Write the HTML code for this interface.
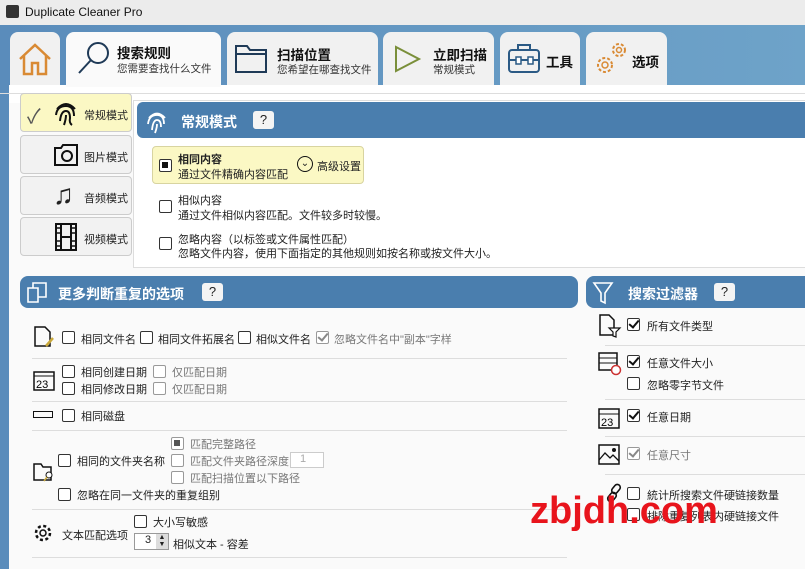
<!DOCTYPE html>
<html><head><meta charset="utf-8"><style>
*{margin:0;padding:0;box-sizing:border-box}
body{width:805px;height:569px;overflow:hidden;position:relative;background:#fafafa;font-family:"Liberation Sans","Noto Sans CJK SC",sans-serif;color:#222}
.a{position:absolute}
.tab{position:absolute;top:32px;height:53px;background:#f1f1f1;border-radius:8px 8px 0 0}
.t1{font-size:13.5px;font-weight:bold;color:#111}
.t2{font-size:10.5px;color:#333}
.cb{position:absolute;width:13px;height:13px;border:1.5px solid #333;border-radius:2px;background:#fff}
.cb.g{border-color:#999}
.ck::after{content:"";position:absolute;left:3px;top:-1px;width:4px;height:8px;border:solid #111;border-width:0 2px 2px 0;transform:rotate(40deg)}
.ck.g::after{border-color:#888}
.lb{position:absolute;font-size:11px;color:#222;white-space:nowrap}
.lb.g{color:#777}
.hd{position:absolute;background:#4a7eae;border-radius:8px;color:#fff;font-weight:bold;font-size:14px}
.q{position:absolute;width:21px;height:18px;background:#f4f4f4;border-radius:3px;color:#222;font-size:13px;text-align:center;line-height:18px;font-weight:normal}
.sep{position:absolute;height:1px;background:#ddd}
.mb{position:absolute;left:20px;width:112px;height:39px;background:#f2f2f2;border:1px solid #ccc;border-radius:4px;font-size:11px}
</style></head><body>
<div class="a" style="left:0;top:0;width:805px;height:25px;background:#ececec"></div>
<div class="a" style="left:6px;top:5px;width:13px;height:13px;background:#333;border-radius:2px"></div>
<div class="a" style="left:25px;top:5px;font-size:12px;color:#111">Duplicate Cleaner Pro</div>
<div class="a" style="left:0;top:25px;width:805px;height:60px;background:linear-gradient(90deg,#5a8cbb,#6ea3c9)"></div>
<div class="a" style="left:0;top:85px;width:805px;height:18px;background:#fff"></div>
<div class="a" style="left:0;top:85px;width:9px;height:484px;background:#5a8cbb"></div>
<div class="a" style="left:0;top:93px;width:805px;height:1px;background:#ddd"></div>
<!-- tabs -->
<div class="tab" style="left:10px;width:50px"><svg class="a" style="left:7px;top:10px" width="36" height="34" viewBox="0 0 36 34"><path d="M3 17L18 3L33 17M7 14V32H15V21H21V32H29V14" fill="none" stroke="#d98a34" stroke-width="2.5"/></svg></div>
<div class="tab" style="left:66px;width:155px;background:#fafafa;height:55px"><svg class="a" style="left:10px;top:8px" width="36" height="36"><circle cx="22" cy="13" r="10" fill="none" stroke="#1f3a57" stroke-width="2"/><path d="M15 20L3 33" stroke="#1f3a57" stroke-width="2"/></svg><div class="a t1" style="left:51px;top:10px">搜索规则</div><div class="a t2" style="left:51px;top:29px">您需要查找什么文件</div></div>
<div class="tab" style="left:227px;width:151px"><svg class="a" style="left:7px;top:10px" width="36" height="32"><path d="M2 4H13L16 8H32V30H2Z M2 12H32" fill="none" stroke="#1f3a57" stroke-width="2"/></svg><div class="a t1" style="left:50px;top:12px">扫描位置</div><div class="a t2" style="left:50px;top:30px">您希望在哪查找文件</div></div>
<div class="tab" style="left:383px;width:111px"><svg class="a" style="left:10px;top:12px" width="30" height="30"><path d="M3 3L26 15L3 27Z" fill="none" stroke="#7a8f3a" stroke-width="2"/></svg><div class="a t1" style="left:50px;top:12px">立即扫描</div><div class="a t2" style="left:50px;top:30px">常规模式</div></div>
<div class="tab" style="left:500px;width:80px"><svg class="a" style="left:7px;top:10px" width="36" height="34"><rect x="2" y="8" width="30" height="22" rx="3" fill="none" stroke="#2b5a85" stroke-width="2"/><path d="M11 8V3H23V8M2 18H32" fill="none" stroke="#2b5a85" stroke-width="2"/><rect x="9" y="15" width="5" height="7" fill="#fff" stroke="#2b5a85" stroke-width="1.5"/><rect x="21" y="15" width="5" height="7" fill="#fff" stroke="#2b5a85" stroke-width="1.5"/></svg><div class="a t1" style="left:46px;top:19px">工具</div></div>
<div class="tab" style="left:586px;width:81px"><svg class="a" style="left:7px;top:8px" width="36" height="38"><circle cx="12" cy="25" r="7" fill="none" stroke="#d98a34" stroke-width="2" stroke-dasharray="3 2"/><circle cx="12" cy="25" r="3" fill="none" stroke="#d98a34" stroke-width="1.5"/><circle cx="26" cy="10" r="6" fill="none" stroke="#d98a34" stroke-width="2" stroke-dasharray="3 2"/><circle cx="26" cy="10" r="2.5" fill="none" stroke="#d98a34" stroke-width="1.5"/></svg><div class="a t1" style="left:46px;top:19px">选项</div></div>
<!-- mode buttons -->
<div class="mb" style="top:93px;background:#fbf8c4"><span class="a" style="left:6px;top:6px;font-size:20px;color:#555">✓</span><svg class="a" style="left:32px;top:5px" width="26" height="28"><g fill="none" stroke="#111" stroke-width="2"><path d="M4 10Q13 0 22 10"/><path d="M3 16Q4 7 13 7Q21 7 21 17"/><path d="M7 22Q8 12 13 12Q17 12 17 19Q16 24 19 26"/><path d="M11 26Q13 20 13 16"/></g></svg><span class="a" style="left:63px;top:13px">常规模式</span></div>
<div class="mb" style="top:135px"><svg class="a" style="left:32px;top:7px" width="26" height="24"><path d="M2 5H8L10 2H24V22H2Z" fill="none" stroke="#111" stroke-width="2"/><circle cx="14" cy="13" r="5" fill="none" stroke="#111" stroke-width="2"/></svg><span class="a" style="left:63px;top:13px">图片模式</span></div>
<div class="mb" style="top:176px"><span class="a" style="left:32px;top:2px;font-size:28px">♫</span><span class="a" style="left:63px;top:13px">音频模式</span></div>
<div class="mb" style="top:217px"><svg class="a" style="left:34px;top:5px" width="22" height="28"><rect x="1" y="1" width="20" height="26" fill="none" stroke="#111" stroke-width="2"/><path d="M6 1V27M16 1V27M6 14H16" stroke="#111" stroke-width="2"/><path d="M1 5H6M1 10H6M1 18H6M1 23H6M16 5H21M16 10H21M16 18H21M16 23H21" stroke="#111" stroke-width="1.5"/></svg><span class="a" style="left:63px;top:13px">视频模式</span></div>
<!-- panel -->
<div class="a" style="left:133px;top:100px;width:680px;height:168px;background:#fff;border:1px solid #ddd"></div>
<div class="hd" style="left:137px;top:102px;width:680px;height:36px;border-radius:6px 0 0 6px"><svg class="a" style="left:8px;top:6px" width="24" height="26"><g fill="none" stroke="#fff" stroke-width="1.8"><path d="M4 10Q12 1 20 10"/><path d="M3 16Q4 7 12 7Q19 7 19 16"/><path d="M7 22Q8 12 12 12Q16 12 16 19"/><path d="M10 25Q12 20 12 16"/></g></svg><span class="a" style="left:44px;top:10px">常规模式</span><div class="q" style="left:116px;top:9px">?</div></div>
<div class="a" style="left:152px;top:146px;width:212px;height:38px;background:#fbf8c4;border:1px solid #d8d4a0;border-radius:4px"></div>
<div class="cb" style="left:159px;top:159px"><div class="a" style="left:2px;top:2px;width:6px;height:6px;background:#111"></div></div>
<div class="lb" style="left:178px;top:151px;font-weight:bold">相同内容</div>
<div class="lb" style="left:178px;top:166px">通过文件精确内容匹配</div>
<div class="a" style="left:297px;top:156px;width:16px;height:16px;border:1.5px solid #111;border-radius:50%;font-size:10px;text-align:center;line-height:13px">⌄</div>
<div class="lb" style="left:317px;top:158px">高级设置</div>
<div class="cb" style="left:159px;top:200px"></div>
<div class="lb" style="left:178px;top:192px">相似内容</div>
<div class="lb" style="left:178px;top:207px">通过文件相似内容匹配。文件较多时较慢。</div>
<div class="cb" style="left:159px;top:237px"></div>
<div class="lb" style="left:178px;top:231px">忽略内容（以标签或文件属性匹配）</div>
<div class="lb" style="left:178px;top:245px">忽略文件内容，使用下面指定的其他规则如按名称或按文件大小。</div>
<!-- section headers -->
<div class="hd" style="left:20px;top:276px;width:558px;height:32px"><svg class="a" style="left:6px;top:5px" width="22" height="22"><path d="M2 7H12V21H2ZM7 7V2H20V16H12" fill="none" stroke="#fff" stroke-width="1.6"/></svg><span class="a" style="left:38px;top:8px">更多判断重复的选项</span><div class="q" style="left:182px;top:7px">?</div></div>
<div class="hd" style="left:586px;top:276px;width:230px;height:32px"><svg class="a" style="left:6px;top:5px" width="22" height="24"><path d="M2 2H20L13 12V22L9 20V12Z" fill="none" stroke="#fff" stroke-width="1.6"/></svg><span class="a" style="left:42px;top:8px">搜索过滤器</span><div class="q" style="left:128px;top:7px">?</div></div>
<!-- left rows -->
<svg class="a" style="left:33px;top:325px" width="22" height="24"><path d="M2 2H12L17 7V21H2Z" fill="none" stroke="#111" stroke-width="1.5"/><path d="M13 21L20 13" stroke="#c9a83a" stroke-width="2.5"/></svg>
<div class="cb" style="left:62px;top:331px"></div><div class="lb" style="left:81px;top:331px">相同文件名</div>
<div class="cb" style="left:140px;top:331px"></div><div class="lb" style="left:158px;top:331px">相同文件拓展名</div>
<div class="cb" style="left:238px;top:331px"></div><div class="lb" style="left:256px;top:331px">相似文件名</div>
<div class="cb ck g" style="left:316px;top:331px"></div><div class="lb g" style="left:334px;top:331px">忽略文件名中"副本"字样</div>
<div class="sep" style="left:32px;top:358px;width:535px"></div>
<svg class="a" style="left:33px;top:369px" width="22" height="22"><rect x="1" y="3" width="20" height="18" fill="none" stroke="#111" stroke-width="1.5"/><path d="M1 7H21" stroke="#111"/><text x="3" y="19" font-size="11" font-family="Liberation Sans">23</text></svg>
<div class="cb" style="left:62px;top:365px"></div><div class="lb" style="left:81px;top:364px">相同创建日期</div>
<div class="cb g" style="left:153px;top:365px"></div><div class="lb g" style="left:172px;top:364px">仅匹配日期</div>
<div class="cb" style="left:62px;top:382px"></div><div class="lb" style="left:81px;top:381px">相同修改日期</div>
<div class="cb g" style="left:153px;top:382px"></div><div class="lb g" style="left:172px;top:381px">仅匹配日期</div>
<div class="sep" style="left:32px;top:401px;width:535px"></div>
<div class="a" style="left:33px;top:411px;width:20px;height:7px;border:1.5px solid #111"></div>
<div class="cb" style="left:62px;top:409px"></div><div class="lb" style="left:81px;top:408px">相同磁盘</div>
<div class="sep" style="left:32px;top:430px;width:535px"></div>
<svg class="a" style="left:33px;top:460px" width="22" height="22"><path d="M1 4H8L10 7H18V20H1Z" fill="none" stroke="#111" stroke-width="1.5"/><circle cx="16" cy="15" r="3" fill="#fff" stroke="#111"/><path d="M14 17L11 21" stroke="#c9a83a" stroke-width="1.5"/></svg>
<div class="cb" style="left:58px;top:454px"></div><div class="lb" style="left:77px;top:453px">相同的文件夹名称</div>
<div class="cb g" style="left:171px;top:437px"><div class="a" style="left:2px;top:2px;width:6px;height:6px;background:#555"></div></div><div class="lb g" style="left:190px;top:436px">匹配完整路径</div>
<div class="cb g" style="left:171px;top:454px"></div><div class="lb g" style="left:190px;top:453px">匹配文件夹路径深度</div>
<div class="a" style="left:290px;top:452px;width:34px;height:16px;border:1px solid #ccc;background:#fff;font-size:11px;color:#aaa;padding-left:9px">1</div>
<div class="cb g" style="left:171px;top:471px"></div><div class="lb g" style="left:190px;top:470px">匹配扫描位置以下路径</div>
<div class="cb" style="left:58px;top:488px"></div><div class="lb" style="left:77px;top:487px">忽略在同一文件夹的重复组别</div>
<div class="sep" style="left:32px;top:509px;width:535px"></div>
<svg class="a" style="left:32px;top:522px" width="22" height="22"><circle cx="11" cy="11" r="7" fill="none" stroke="#111" stroke-width="2.5" stroke-dasharray="3 2.5"/><circle cx="11" cy="11" r="3" fill="none" stroke="#111" stroke-width="1.5"/></svg>
<div class="lb" style="left:62px;top:527px">文本匹配选项</div>
<div class="cb" style="left:134px;top:515px"></div><div class="lb" style="left:153px;top:514px">大小写敏感</div>
<div class="a" style="left:134px;top:533px;width:35px;height:17px;border:1px solid #999;background:#fff;font-size:11px;padding-left:10px">3</div>
<div class="a" style="left:156px;top:534px;width:12px;height:15px;background:#ddd;font-size:7px;line-height:7px;text-align:center">▲<br>▼</div>
<div class="lb" style="left:173px;top:536px">相似文本 - 容差</div>
<div class="sep" style="left:32px;top:557px;width:535px"></div>
<!-- right rows -->
<svg class="a" style="left:598px;top:313px" width="24" height="26"><path d="M2 2H11L16 7V22H2Z" fill="none" stroke="#111" stroke-width="1.5"/><path d="M11 15H22L18 19V24L15 23V19Z" fill="#fff" stroke="#111" stroke-width="1.2"/></svg>
<div class="cb ck" style="left:627px;top:318px"></div><div class="lb" style="left:647px;top:318px">所有文件类型</div>
<div class="sep" style="left:605px;top:345px;width:200px"></div>
<svg class="a" style="left:598px;top:352px" width="24" height="24"><rect x="1" y="1" width="18" height="17" fill="none" stroke="#111" stroke-width="1.5"/><path d="M1 6H19M1 11H19" stroke="#111"/><circle cx="18" cy="18" r="4.5" fill="#fff" stroke="#c33" stroke-width="1.5"/></svg>
<div class="cb ck" style="left:627px;top:355px"></div><div class="lb" style="left:647px;top:355px">任意文件大小</div>
<div class="cb" style="left:627px;top:377px"></div><div class="lb" style="left:647px;top:377px">忽略零字节文件</div>
<div class="sep" style="left:605px;top:399px;width:200px"></div>
<svg class="a" style="left:598px;top:406px" width="24" height="24"><rect x="1" y="3" width="20" height="19" fill="none" stroke="#111" stroke-width="1.5"/><path d="M1 8H21" stroke="#111"/><text x="3" y="20" font-size="11" font-family="Liberation Sans">23</text></svg>
<div class="cb ck" style="left:627px;top:409px"></div><div class="lb" style="left:647px;top:409px">任意日期</div>
<div class="sep" style="left:605px;top:436px;width:200px"></div>
<svg class="a" style="left:598px;top:444px" width="24" height="22"><rect x="1" y="1" width="20" height="19" fill="none" stroke="#111" stroke-width="1.5"/><path d="M1 16L7 9L12 14L15 11L21 17" fill="none" stroke="#111" stroke-width="1.3"/><circle cx="16" cy="6" r="2" fill="#111"/></svg>
<div class="cb ck g" style="left:627px;top:447px"></div><div class="lb g" style="left:647px;top:447px">任意尺寸</div>
<div class="sep" style="left:605px;top:474px;width:200px"></div>
<svg class="a" style="left:604px;top:482px" width="22" height="22"><g fill="none" stroke="#111" stroke-width="1.6"><rect x="9" y="2" width="6" height="10" rx="3" transform="rotate(40 12 7)"/><rect x="5" y="10" width="6" height="10" rx="3" transform="rotate(40 8 15)"/></g></svg>
<div class="cb" style="left:627px;top:487px"></div><div class="lb" style="left:647px;top:487px">統计所搜索文件硬链接数量</div>
<div class="cb" style="left:627px;top:508px"></div><div class="lb" style="left:647px;top:508px">排除重复列表内硬链接文件</div>
<div class="a" style="left:530px;top:490px;font-size:38px;font-weight:bold;color:#e8141c;font-family:'Liberation Sans',sans-serif">zbjdh.com</div>
</body></html>
